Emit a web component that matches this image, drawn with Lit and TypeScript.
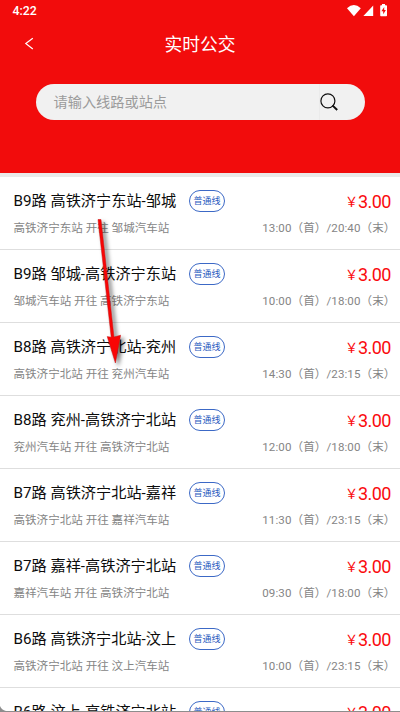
import { LitElement, html, css, svg } from "lit";
import { customElement, property } from "lit/decorators.js";

interface Route {
  name: string;
  trip: string;
  hours: string;
}

const ROUTES: Route[] = [
  { name: "B9路 高铁济宁东站-邹城", trip: "高铁济宁东站 开往 邹城汽车站", hours: "13:00（首）/20:40（末）" },
  { name: "B9路 邹城-高铁济宁东站", trip: "邹城汽车站 开往 高铁济宁东站", hours: "10:00（首）/18:00（末）" },
  { name: "B8路 高铁济宁北站-兖州", trip: "高铁济宁北站 开往 兖州汽车站", hours: "14:30（首）/23:15（末）" },
  { name: "B8路 兖州-高铁济宁北站", trip: "兖州汽车站 开往 高铁济宁北站", hours: "12:00（首）/18:00（末）" },
  { name: "B7路 高铁济宁北站-嘉祥", trip: "高铁济宁北站 开往 嘉祥汽车站", hours: "11:30（首）/23:15（末）" },
  { name: "B7路 嘉祥-高铁济宁北站", trip: "嘉祥汽车站 开往 高铁济宁北站", hours: "09:30（首）/18:00（末）" },
  { name: "B6路 高铁济宁北站-汶上", trip: "高铁济宁北站 开往 汶上汽车站", hours: "10:00（首）/23:15（末）" },
  { name: "B6路 汶上-高铁济宁北站", trip: "汶上汽车站 开往 高铁济宁北站", hours: "10:00（首）/18:00（末）" },
];

@customElement("route-row")
export class RouteRow extends LitElement {
  @property({ attribute: false }) route!: Route;

  static styles = css`
    :host {
      display: block;
      box-sizing: border-box;
      flex: none;
      height: 73px;
      padding: 12px 9px 0 13.5px;
      border-bottom: 1px solid #dedede;
      background: #fff;
    }
    .top {
      display: flex;
      align-items: center;
      height: 24px;
    }
    .name {
      width: 175.5px;
      font-size: 15.2px;
      line-height: 24px;
      color: #0c0c0c;
      white-space: nowrap;
    }
    .tag {
      box-sizing: border-box;
      width: 36px;
      height: 22px;
      border: 1px solid #3c69c6;
      border-radius: 11px;
      font-size: 9px;
      line-height: 20px;
      text-align: center;
      color: #2a5cc0;
      white-space: nowrap;
    }
    .price {
      margin-left: auto;
      padding-top: 2px;
      color: #fa0a0e;
      font-size: 18px;
      line-height: 24px;
      letter-spacing: -0.5px;
      white-space: nowrap;
    }
    .yen {
      font-family: "Noto Sans CJK SC", sans-serif;
      font-size: 13px;
      line-height: 1;
      letter-spacing: 0;
      vertical-align: 2px;
    }
    .bottom {
      display: flex;
      justify-content: space-between;
      margin: 6px -4.5px 0 0;
      font-size: 11.55px;
      line-height: 18px;
      color: #858585;
      white-space: nowrap;
    }
    .hours {
      letter-spacing: 0.1px;
    }
  `;

  render() {
    return html`
      <div class="top">
        <span class="name">${this.route.name}</span>
        <span class="tag">普通线</span>
        <span class="price"><span class="yen">￥</span><span>3.00</span></span>
      </div>
      <div class="bottom">
        <span>${this.route.trip}</span>
        <span class="hours">${this.route.hours}</span>
      </div>
    `;
  }
}

const arrow = svg`
  <polygon points="98,219.5 101,219.5 114,337 120.6,335.2 115.4,363 107.2,336.6 111.2,337.2" />
`;

@customElement("app-root")
export class AppRoot extends LitElement {
  static styles = css`
    :host {
      display: flex;
      flex-direction: column;
      position: relative;
      width: 400px;
      height: 712px;
      overflow: hidden;
      background: #fff;
      font-family: Roboto, "Noto Sans CJK SC", sans-serif;
    }
    .head {
      flex: none;
      height: 173px;
      background: #f20c0c;
      color: #fff;
    }
    .status {
      display: flex;
      justify-content: space-between;
      height: 24px;
      padding: 0 12px 0 12.5px;
      font-size: 12.3px;
      font-weight: 500;
      line-height: 23px;
    }
    .status svg {
      display: block;
    }
    .nav {
      display: grid;
      grid-template-columns: 60px 1fr 60px;
      align-items: center;
      height: 40px;
    }
    .back {
      margin: 0 0 2px 23px;
      display: block;
    }
    .title {
      padding-top: 2px;
      font-size: 17.8px;
      line-height: 26px;
      text-align: center;
    }
    .search {
      display: flex;
      align-items: center;
      justify-content: space-between;
      box-sizing: border-box;
      width: 329px;
      height: 36px;
      margin: 19.5px 0 0 35.5px;
      padding-left: 18px;
      border-radius: 18px;
      background: #f1f1f1;
      color: #9b9b9b;
      font-size: 14.2px;
      overflow: hidden;
    }
    .hint {
      padding-bottom: 2px;
    }
    .go {
      box-sizing: border-box;
      width: 46px;
      height: 36px;
      padding-top: 9px;
      border-left: 1px solid #ebebeb;
    }
    .go svg {
      display: block;
    }
    .gap {
      flex: none;
      height: 4px;
      background: #eaeaea;
    }
    .overlay {
      position: absolute;
      inset: 0;
    }
    .pointer {
      fill: #f90505;
      stroke: #c41212;
      stroke-width: 0.5;
      filter: drop-shadow(3px 3px 2px rgba(0, 0, 0, 0.55));
    }
    .edge {
      fill: #8d8d8d;
    }
  `;

  render() {
    return html`
      <div class="head">
        <div class="status">
          <span>4:22</span>
          <svg width="42" height="24" viewBox="346 0 42 24" fill="#fff">
            <path d="M347 8.2Q353.8 2 360.8 8.2L353.9 16.2Z" />
            <path d="M363.4 16L373.2 5.4V16Z" />
            <path d="M382 4h3v1.3h1.2q.8 0 .8.8V15.4q0 .8-.8.8h-5.2q-.8 0-.8-.8V6.1q0-.8.8-.8h1z" />
            <path fill="#f20c0c" d="M384.2 7l-2.8 4.2h1.8v3l2.7-4.3h-1.7z" />
          </svg>
        </div>
        <div class="nav">
          <svg class="back" width="12" height="14" viewBox="23 36 12 14" fill="none" stroke="#fff" stroke-width="1.2">
            <path d="M32.8 38.2L25.8 43.6L32.8 49" />
          </svg>
          <span class="title">实时公交</span>
        </div>
        <div class="search">
          <span class="hint">请输入线路或站点</span>
          <span class="go">
            <svg width="20" height="20" viewBox="0 0 20 20" fill="none" stroke="#111">
              <circle cx="7.9" cy="7.9" r="7" stroke-width="1.2" />
              <path d="M12.4 12.4L17.2 17" stroke-width="2" />
            </svg>
          </span>
        </div>
      </div>
      <div class="gap"></div>
      ${ROUTES.map((route) => html`<route-row .route=${route}></route-row>`)}
      <svg class="overlay" width="400" height="712" viewBox="0 0 400 712">
        <g class="pointer">${arrow}</g>
        <path class="edge" d="M0 706Q1.5 710 6 711H400V712H0Z" />
      </svg>
    `;
  }
}
